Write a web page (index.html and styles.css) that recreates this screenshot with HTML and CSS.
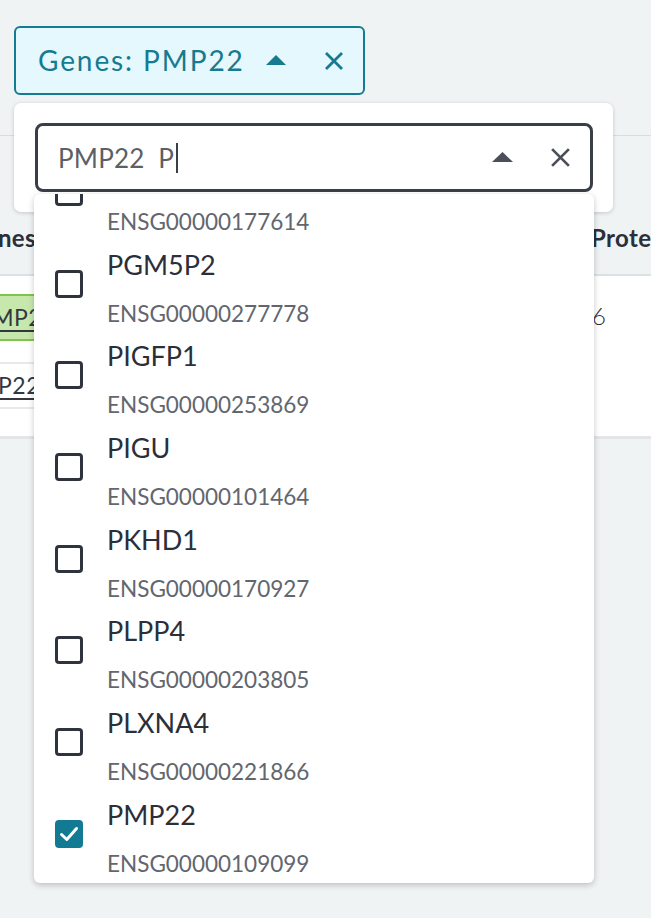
FILE: index.html
```html
<!DOCTYPE html>
<html lang="en">
<head>
<meta charset="utf-8">
<title>Genes filter</title>
<link rel="stylesheet" href="styles.css">
</head>
<body>
<div class="page">
  <div class="chip-row">
    <div class="chip">
      <span class="chip-label">Genes: PMP22</span>
      <svg class="chip-caret" width="20" height="10" viewBox="0 0 20 10"><path d="M0 10 L10 0 L20 10 Z" fill="currentColor"/></svg>
      <svg class="chip-close" width="20" height="20" viewBox="0 0 20 20"><path d="M2 2 L18 18 M18 2 L2 18" stroke="currentColor" stroke-width="2.8" fill="none"/></svg>
    </div>
  </div>

  <div class="table">
    <div class="row head">
      <div class="cell first"><span class="th">Genes</span></div>
      <div class="cell mid"></div>
      <div class="cell last"><span class="th">Protein</span></div>
    </div>
    <div class="row body r1">
      <div class="cell first"><span class="gene hl">PMP22</span></div>
      <div class="cell mid"></div>
      <div class="cell last"><span class="val">6</span></div>
    </div>
    <div class="row body r2">
      <div class="cell first"><span class="gene boxed">PMP22</span></div>
      <div class="cell mid"></div>
      <div class="cell last"></div>
    </div>
  </div>

  <div class="panel">
    <div class="search">
      <span class="search-text">PMP22&nbsp; P</span><span class="caret-line"></span>
      <svg class="s-caret" width="21" height="10" viewBox="0 0 21 10"><path d="M0 10 L10.5 0 L21 10 Z" fill="currentColor"/></svg>
      <svg class="s-close" width="21" height="21" viewBox="0 0 20 20"><path d="M2 2 L18 18 M18 2 L2 18" stroke="currentColor" stroke-width="2.6" fill="none"/></svg>
    </div>
  </div>

  <div class="dropdown">
    <ul class="list">
      <li class="item"><span class="box"></span><div class="txt"><div class="name">PGLYRP4</div><div class="id">ENSG00000177614</div></div></li>
      <li class="item"><span class="box"></span><div class="txt"><div class="name">PGM5P2</div><div class="id">ENSG00000277778</div></div></li>
      <li class="item"><span class="box"></span><div class="txt"><div class="name">PIGFP1</div><div class="id">ENSG00000253869</div></div></li>
      <li class="item"><span class="box"></span><div class="txt"><div class="name">PIGU</div><div class="id">ENSG00000101464</div></div></li>
      <li class="item"><span class="box"></span><div class="txt"><div class="name">PKHD1</div><div class="id">ENSG00000170927</div></div></li>
      <li class="item"><span class="box"></span><div class="txt"><div class="name">PLPP4</div><div class="id">ENSG00000203805</div></div></li>
      <li class="item"><span class="box"></span><div class="txt"><div class="name">PLXNA4</div><div class="id">ENSG00000221866</div></div></li>
      <li class="item"><span class="box checked"><svg width="22" height="22" viewBox="0 0 22 22"><path d="M3.5 11.5 L8.8 16.5 L18.5 5.5" stroke="#fff" stroke-width="3" fill="none" stroke-linecap="round" stroke-linejoin="round"/></svg></span><div class="txt"><div class="name">PMP22</div><div class="id">ENSG00000109099</div></div></li>
    </ul>
  </div>
</div>
</body>
</html>
```

FILE: styles.css
```css
* { box-sizing: border-box; }
html, body { margin: 0; padding: 0; }
body {
  background: #eff3f4;
  font-family: Lato, "Open Sans", "DejaVu Sans", sans-serif;
  color: #2b2f3a;
}
.page {
  position: relative;
  width: 651px;
  height: 918px;
  overflow: hidden;
  padding-top: 26px;
}
.chip-row { padding: 0 14px; }
.chip {
  display: flex;
  align-items: center;
  width: 351px;
  height: 69px;
  border: 2px solid #137b92;
  border-radius: 6px;
  background: #e5f8fd;
  color: #167a90;
  padding: 0 19px 0 22px;
}
.chip-label { font-size: 28px; letter-spacing: 1.9px; margin-top: -1px; }
.chip-caret { margin-left: auto; margin-top: -2px; }
.chip-close { margin-left: 38px; }

.table {
  margin-top: 40px;
  border-top: 1px solid #d9dde0;
  border-bottom: 3px solid #e3e5e7;
}
.row { display: flex; }
.row.head {
  height: 140px;
  align-items: flex-end;
  border-bottom: 2px solid #dde1e3;
  padding-bottom: 21px;
}
.row.body { background: #fff; }
.row.r1 { height: 86px; }
.row.r2 { height: 74px; }
.cell.first {
  width: 80px;
  display: flex;
  justify-content: flex-end;
  overflow: hidden;
  flex-shrink: 0;
}
.cell.mid { flex: 1; }
.cell.last {
  width: 61px;
  flex-shrink: 0;
  white-space: nowrap;
  overflow: hidden;
}
.th {
  font-weight: 700;
  font-size: 24px;
  line-height: 30px;
  white-space: nowrap;
  letter-spacing: 0.4px;
}
.head .cell.first { padding-right: 44px; }
.head .cell.last { padding-left: 1px; }
.gene {
  font-size: 23px;
  line-height: 43px;
  text-decoration: underline;
  text-underline-offset: 4px;
  text-decoration-thickness: 2px;
  white-space: nowrap;
  color: #333740;
  letter-spacing: 0.5px;
}
.r1 .cell.first { padding-top: 18px; padding-right: 14px; align-items: flex-start; }
.gene.hl {
  height: 47px;
  background: #c6e8ad;
  border: 2px solid #80c44c;
  padding: 0 8px;
}
.r2 .cell.first { align-items: flex-start; padding-right: 32px; }
.gene.boxed {
  height: 47px;
  background: #fff;
  border-top: 2px solid #e7e9ea;
  border-bottom: 2px solid #e7e9ea;
  padding: 0 8px;
}
.r1 .cell.last { padding-top: 18px; padding-left: 2px; }
.val { font-size: 24px; line-height: 43px; font-weight: 300; }

.panel {
  position: absolute;
  top: 103px;
  left: 14px;
  width: 599px;
  height: 109px;
  background: #fff;
  border-radius: 7px;
  box-shadow: 0 1px 4px rgba(0,0,0,0.18);
  padding: 20px 20px 0 21px;
}
.search {
  display: flex;
  align-items: center;
  height: 69px;
  border: 3px solid #3a3e48;
  border-radius: 8px;
  padding: 0 19px 0 20px;
  color: #4b4f58;
}
.search-text {
  font-size: 26px;
  color: #5b5f67;
  white-space: pre;
  letter-spacing: 0.2px;
}
.caret-line {
  width: 2px;
  height: 30px;
  background: #3a3e48;
  margin-left: 2px;
}
.s-caret { margin-left: auto; margin-top: -2px; }
.s-close { margin-left: 37px; }

.dropdown {
  position: absolute;
  top: 194px;
  left: 34px;
  width: 560px;
  height: 689px;
  background: #fff;
  border-radius: 6px;
  box-shadow: 0 2px 6px rgba(0,0,0,0.22);
  overflow: hidden;
}
.list {
  list-style: none;
  margin: -43px 0 0 0;
  padding: 0;
}
.item {
  display: flex;
  align-items: flex-start;
  padding: 8px 20px 8.67px 21px;
}
.box {
  width: 28px;
  height: 28px;
  border: 3px solid #2f333e;
  border-radius: 4px;
  margin-top: 19px;
  flex-shrink: 0;
  display: flex;
  align-items: center;
  justify-content: center;
}
.box.checked {
  background: #137a93;
  border-color: #137a93;
}
.txt { margin-left: 24px; }
.name {
  font-size: 27px;
  line-height: 28px;
  color: #2b2f3a;
}
.id {
  font-size: 22.5px;
  line-height: 24px;
  margin-top: 23px;
  color: #62666e;
}
```
